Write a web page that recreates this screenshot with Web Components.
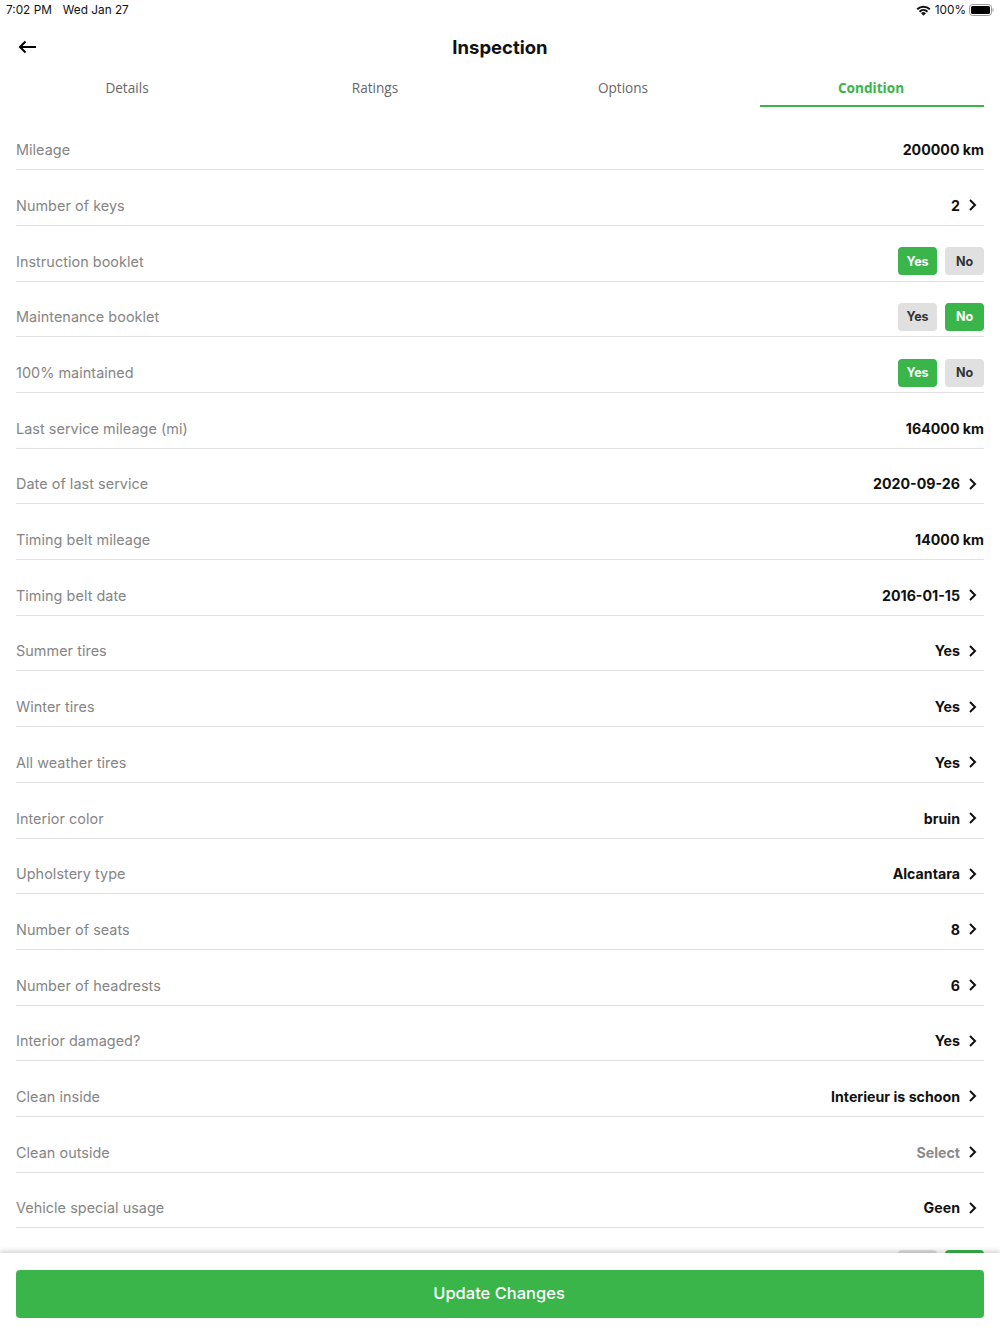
<!DOCTYPE html>
<html lang="en">
<head>
<meta charset="utf-8">
<title>Inspection</title>
<style>
  html, body { margin: 0; height: 100%; background: #fff; }
  body { font-family: "Inter", "Liberation Sans", sans-serif; }
</style>
</head>
<body>
<inspection-page></inspection-page>
<script>
const chevron = `<svg width="10" height="14" viewBox="0 0 10 14" fill="none"><path d="M2 2 7 7 2 12" stroke="#111" stroke-width="2"/></svg>`;

class StatusBar extends HTMLElement {
  constructor() {
    super();
    this.attachShadow({ mode: "open" }).innerHTML = `
      <style>
        :host { display: flex; justify-content: space-between; align-items: center; height: 20px; padding: 0 6px; font: 11.8px "Inter", sans-serif; color: #111; }
        .left { display: flex; gap: 11px; }
        .right { display: flex; align-items: center; }
        .wifi { margin-right: 4px; }
        .batt { margin-left: 3px; }
        svg { display: block; }
      </style>
      <div class="left"><span>7:02 PM</span><span>Wed Jan 27</span></div>
      <div class="right">
        <svg class="wifi" width="15" height="11" viewBox="0 0 15 11"><path d="M0.5 3.6A10 10 0 0 1 14.5 3.6L13.1 5A8 8 0 0 0 1.9 5Z M2.8 6A6.8 6.8 0 0 1 12.2 6L10.8 7.4A4.8 4.8 0 0 0 4.2 7.4Z M5.1 8.3A3.4 3.4 0 0 1 9.9 8.3L7.5 10.8Z" fill="#111"/></svg>
        <span>100%</span>
        <svg class="batt" width="25" height="12" viewBox="0 0 25 12"><rect x="0.5" y="0.5" width="22" height="11" rx="3" fill="none" stroke="#999"/><rect x="2" y="2" width="19" height="8" rx="1.5" fill="#000"/><path d="M23.5 4v4c.8-.3 1.2-1 1.2-2s-.4-1.7-1.2-2z" fill="#aaa"/></svg>
      </div>`;
  }
}

class TopBar extends HTMLElement {
  constructor() {
    super();
    this.attachShadow({ mode: "open" }).innerHTML = `
      <style>
        :host { display: grid; grid-template-columns: 1fr auto 1fr; align-items: center; height: 54px; padding: 0 18px; }
        h1 { margin: 0; font: 700 18.5px "Inter", sans-serif; color: #111; }
        svg { display: block; }
      </style>
      <svg width="18" height="14" viewBox="0 0 18 14" fill="none"><path d="M18 7H2M7.5 1.5 2 7l5.5 5.5" stroke="#000" stroke-width="2"/></svg>
      <h1><slot></slot></h1>`;
  }
}

class TabStrip extends HTMLElement {
  constructor() {
    super();
    this.attachShadow({ mode: "open" }).innerHTML = `
      <style>
        :host { display: grid; grid-template-columns: repeat(4, 1fr); gap: 24px; padding: 0 16px; height: 33px; }
      </style>
      <slot></slot>`;
  }
}

class TabItem extends HTMLElement {
  constructor() {
    super();
    this.attachShadow({ mode: "open" }).innerHTML = `
      <style>
        :host { display: flex; justify-content: center; align-items: center; height: 33px; box-sizing: border-box; padding: 0 2px 4px 0; font: 13.6px "Open Sans", sans-serif; color: #666; border-bottom: 2px solid transparent; }
        :host([active]) { font-weight: 700; color: #3ab54a; border-bottom-color: #3ab54a; }
      </style>
      <slot></slot>`;
  }
}

class FormRow extends HTMLElement {
  constructor() {
    super();
    this.attachShadow({ mode: "open" }).innerHTML = `
      <style>
        :host { display: flex; justify-content: space-between; align-items: center; box-sizing: border-box; height: 55.7px; padding: 21.2px 0 5.5px; border-bottom: 1px solid #e2e2e2; font-size: 14.4px; }
        .label { color: #858585; letter-spacing: 0.05px; }
        .value { display: flex; align-items: center; font-weight: 700; font-size: 14.2px; color: #111; }
        .value.muted { color: #8a8a8a; }
        svg { display: block; margin: 0 6px 0 8px; }
        .toggle { display: flex; gap: 8px; }
        .btn { display: flex; justify-content: center; align-items: center; width: 39px; height: 28px; border-radius: 4px; background: #e0e0e0; color: #333; font-size: 12.5px; font-weight: 700; }
        .btn.on { background: #3ab54a; color: #fff; }
      </style>
      <span class="label"></span>
      <div class="end"></div>`;
  }
  connectedCallback() {
    const root = this.shadowRoot;
    root.querySelector(".label").textContent = this.getAttribute("label") || "";
    const end = root.querySelector(".end");
    const toggle = this.getAttribute("toggle");
    // the last row is almost fully behind the save bar, only the tops of its buttons show
    const cut = this.hasAttribute("cut");
    if (toggle) {
      end.className = "toggle";
      end.innerHTML = `<span class="btn ${toggle === "yes" ? "on" : ""}">${cut ? "" : "Yes"}</span><span class="btn ${toggle === "no" ? "on" : ""}">${cut ? "" : "No"}</span>`;
    } else {
      end.className = "value" + (this.hasAttribute("muted") ? " muted" : "");
      end.innerHTML = `<span>${this.getAttribute("value")}</span>` + (this.hasAttribute("chevron") ? chevron : "");
    }
  }
}

class SaveBar extends HTMLElement {
  constructor() {
    super();
    this.attachShadow({ mode: "open" }).innerHTML = `
      <style>
        :host { display: block; position: relative; background: #fff; padding: 17px 16px 16px; box-shadow: 0 -2px 5px rgba(0,0,0,.18); }
        button { display: block; width: 100%; height: 48px; padding: 0 2px 2px 0; border: 0; border-radius: 4px; background: #3ab54a; color: #fff; font: 500 16.5px "Inter", sans-serif; }
      </style>
      <button><slot></slot></button>`;
  }
}

class InspectionPage extends HTMLElement {
  constructor() {
    super();
    const rows = [
      ["Mileage", "200000 km"],
      ["Number of keys", "2", 1],
      ["Instruction booklet", null, 0, "yes"],
      ["Maintenance booklet", null, 0, "no"],
      ["100% maintained", null, 0, "yes"],
      ["Last service mileage (mi)", "164000 km"],
      ["Date of last service", "2020-09-26", 1],
      ["Timing belt mileage", "14000 km"],
      ["Timing belt date", "2016-01-15", 1],
      ["Summer tires", "Yes", 1],
      ["Winter tires", "Yes", 1],
      ["All weather tires", "Yes", 1],
      ["Interior color", "bruin", 1],
      ["Upholstery type", "Alcantara", 1],
      ["Number of seats", "8", 1],
      ["Number of headrests", "6", 1],
      ["Interior damaged?", "Yes", 1],
      ["Clean inside", "Interieur is schoon", 1],
      ["Clean outside", "Select", 1, null, 1],
      ["Vehicle special usage", "Geen", 1],
    ].map(([label, value, chev, toggle, muted]) =>
      `<form-row label="${label}"${value ? ` value="${value}"` : ""}${chev ? " chevron" : ""}${toggle ? ` toggle="${toggle}"` : ""}${muted ? " muted" : ""}></form-row>`
    ).join("");
    this.attachShadow({ mode: "open" }).innerHTML = `
      <style>
        :host { display: flex; flex-direction: column; height: 1334px; overflow: hidden; background: #fff; }
        .list { flex: 1; min-height: 0; overflow: hidden; padding: 7.6px 16px 0; }
      </style>
      <status-bar></status-bar>
      <top-bar>Inspection</top-bar>
      <tab-strip>
        <tab-item>Details</tab-item>
        <tab-item>Ratings</tab-item>
        <tab-item>Options</tab-item>
        <tab-item active>Condition</tab-item>
      </tab-strip>
      <div class="list">${rows}<form-row toggle="no" cut></form-row></div>
      <save-bar>Update Changes</save-bar>`;
  }
}

customElements.define("status-bar", StatusBar);
customElements.define("top-bar", TopBar);
customElements.define("tab-strip", TabStrip);
customElements.define("tab-item", TabItem);
customElements.define("form-row", FormRow);
customElements.define("save-bar", SaveBar);
customElements.define("inspection-page", InspectionPage);
</script>
</body>
</html>
